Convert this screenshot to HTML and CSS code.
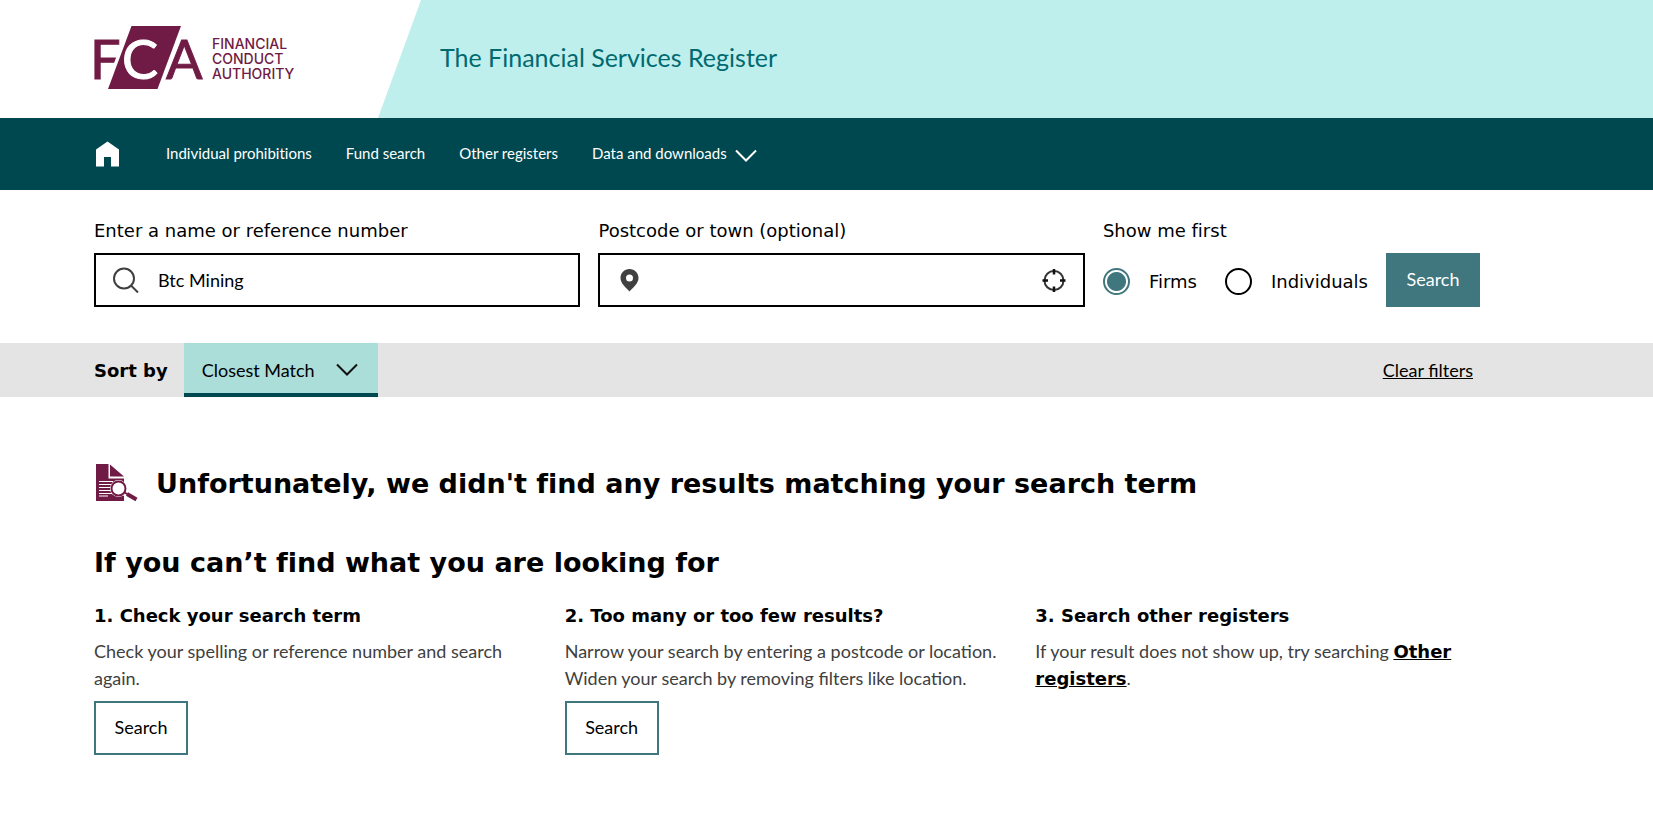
FILE: index.html
```html
<!DOCTYPE html>
<html lang="en">
<head>
<meta charset="utf-8">
<meta name="viewport" content="width=device-width, initial-scale=1">
<title>The Financial Services Register</title>
<link rel="stylesheet" href="styles.css">
</head>
<body>
<header class="masthead">
  <a class="logo" href="#" aria-label="Financial Conduct Authority">
    <svg width="202" height="64" viewBox="0 0 202 64" aria-hidden="true">
      <text class="logo-letter" x="-4" y="53">F</text>
      <path d="M34.500 -2.500L9.500 66H62L87 -2.500Z" fill="#fff"/>
      <path d="M37.500 0H87L63.500 63H14Z" fill="#701b45"/>
      <text class="logo-letter logo-letter-light" x="28" y="53">C</text>
      <text class="logo-letter" x="72" y="53">A</text>
      <text class="logo-name" x="118" y="23">FINANCIAL</text>
      <text class="logo-name" x="118" y="38">CONDUCT</text>
      <text class="logo-name" x="118" y="53">AUTHORITY</text>
    </svg>
  </a>
  <div class="masthead-band"><span class="masthead-title">The Financial Services Register</span></div>
</header>

<nav class="main-nav" aria-label="Main">
  <a class="home-link" href="#" aria-label="Home">
    <svg width="24" height="26" viewBox="0 0 24 26" aria-hidden="true"><path d="M11.500 0.500L23 8.500V25.500H15V16H8V25.500H0V8.500Z" fill="#fff"/></svg>
  </a>
  <a class="nav-link" href="#">Individual prohibitions</a>
  <a class="nav-link" href="#">Fund search</a>
  <a class="nav-link" href="#">Other registers</a>
  <button class="nav-link nav-menu" type="button">Data and downloads
    <svg width="22" height="14" viewBox="0 0 22 14" aria-hidden="true"><path d="M1 1.500L11 11.500L21 1.500" fill="none" stroke="#fff" stroke-width="2"/></svg>
  </button>
</nav>

<main>
  <form class="search-form">
    <div class="field">
      <label class="field-label" for="name">Enter a name or reference number</label>
      <div class="input-box">
        <svg class="input-icon" width="26" height="26" viewBox="0 0 26 26" aria-hidden="true"><g fill="none" stroke="#404040" stroke-width="2"><circle cx="11" cy="11.500" r="10"/><path d="M18 18.500L25 25.500"/></g></svg>
        <input class="text-input" id="name" type="text" value="Btc Mining">
      </div>
    </div>
    <div class="field">
      <label class="field-label" for="place">Postcode or town (optional)</label>
      <div class="input-box">
        <svg class="input-icon" width="26" height="26" viewBox="0 0 26 26" aria-hidden="true"><path fill="#404040" fill-rule="evenodd" d="M12.500 2C7.300 2 3.500 6 3.500 11C3.500 16.500 9 20.500 12.500 24.500C16 20.500 21.500 16.500 21.500 11C21.500 6 17.700 2 12.500 2ZM12.500 7.500A3.500 3.500 0 1 1 12.500 14.500A3.500 3.500 0 1 1 12.500 7.500Z"/></svg>
        <input class="text-input" id="place" type="text">
        <button class="locate" type="button" aria-label="Use my location">
          <svg width="24" height="24" viewBox="0 0 24 24" aria-hidden="true"><circle cx="12" cy="12.500" r="9.500" fill="none" stroke="#333" stroke-width="2"/><path d="M12 1V6.500M12 18.500V24M0.500 12.500H6M18 12.500H23.500" fill="none" stroke="#111" stroke-width="2.500"/></svg>
        </button>
      </div>
    </div>
    <fieldset class="choices">
      <legend class="field-label">Show me first</legend>
      <div class="choice-row">
        <label class="choice"><input class="radio" type="radio" name="first" checked>Firms</label>
        <label class="choice"><input class="radio" type="radio" name="first">Individuals</label>
      </div>
    </fieldset>
    <button class="button button-solid" type="submit">Search</button>
  </form>

  <div class="sort-bar">
    <div class="sort-inner">
      <label class="sort-label" for="sort">Sort by</label>
      <div class="sort-box">
        <select class="sort-select" id="sort"><option>Closest Match</option></select>
        <svg class="sort-chevron" width="22" height="14" viewBox="0 0 22 14" aria-hidden="true"><path d="M1 1.500L11 11.500L21 1.500" fill="none" stroke="#111" stroke-width="2"/></svg>
      </div>
      <a class="clear-link" href="#">Clear filters</a>
    </div>
  </div>

  <section class="results">
    <div class="notice">
      <svg class="notice-icon" width="42" height="38" viewBox="0 0 42 38" aria-hidden="true">
        <path d="M0 0H12.500V14.500H28V37H0Z" fill="#701b45"/>
        <path d="M14 0.500L28 12.500H14Z" fill="#701b45"/>
        <path d="M3 17.500H17M3 20.500H15M3 23.500H15M3 26.500H15M3 29.500H17M3 32H12" stroke="#fff" stroke-width="1"/>
        <circle cx="22.500" cy="24.500" r="8.500" fill="#fff"/>
        <path d="M28 28.500L41 36.500" stroke="#fff" stroke-width="6"/>
        <circle cx="22.500" cy="24.500" r="7" fill="#fff" stroke="#701b45" stroke-width="2"/>
        <path d="M28.500 28.500L32 30.500" stroke="#701b45" stroke-width="2"/>
        <path d="M31 30L40.500 35.500" stroke="#701b45" stroke-width="4"/>
      </svg>
      <h1 class="heading">Unfortunately, we didn't find any results matching your search term</h1>
    </div>
    <h2 class="heading">If you can’t find what you are looking for</h2>
    <div class="tips">
      <div class="tip">
        <h3 class="tip-title">1. Check your search term</h3>
        <p class="tip-text">Check your spelling or reference number and search again.</p>
        <button class="button button-outline" type="button">Search</button>
      </div>
      <div class="tip">
        <h3 class="tip-title">2. Too many or too few results?</h3>
        <p class="tip-text">Narrow your search by entering a postcode or location. Widen your search by removing filters like location.</p>
        <button class="button button-outline" type="button">Search</button>
      </div>
      <div class="tip">
        <h3 class="tip-title">3. Search other registers</h3>
        <p class="tip-text">If your result does not show up, try searching <a class="strong-link" href="#">Other registers</a>.</p>
      </div>
    </div>
  </section>
</main>
</body>
</html>
```
FILE: styles.css
```css
* {
  box-sizing: border-box;
}

:root {
  --gutter: 94px;
  --dark: #004850;
  --teal: #40767d;
  --plum: #701b45;
  --text: Lato, "Liberation Sans", sans-serif;
  --display: "DejaVu Sans", Verdana, sans-serif;
}

body {
  margin: 0;
  background: #fff;
  color: #000;
  font: 18px/27px var(--text);
}

button,
input,
select {
  margin: 0;
  font: inherit;
  color: inherit;
}

.masthead {
  display: flex;
  height: 118px;
  padding-left: var(--gutter);
}

.logo {
  width: 284px;
  padding-top: 26px;
}

.logo svg {
  display: block;
  overflow: visible;
}

.logo-letter {
  font: 54px var(--text);
  fill: var(--plum);
  stroke: var(--plum);
  stroke-width: 1px;
}

.logo-letter-light {
  fill: #fff;
  stroke: #fff;
}

.logo-name {
  font: 500 14px Inter, var(--text);
  fill: var(--plum);
}

.masthead-band {
  flex: 1;
  display: flex;
  align-items: center;
  padding: 0 0 4px 62px;
  background: #bfefec;
  clip-path: polygon(43px 0, 100% 0, 100% 100%, 0 100%);
}

.masthead-title {
  color: #006a70;
  font-size: 25px;
}

.main-nav {
  display: flex;
  align-items: center;
  gap: 34px;
  min-height: 72px;
  padding: 0 0 1px 96px;
  background: var(--dark);
  color: #fff;
  font-variant-ligatures: none;
}

.home-link {
  display: flex;
  margin-right: 12px;
}

.nav-link {
  color: #fff;
  font-size: 15px;
  text-decoration: none;
}

.nav-menu {
  display: flex;
  align-items: center;
  gap: 8px;
  padding: 0;
  border: 0;
  background: none;
}

.nav-menu svg {
  margin-top: 4px;
}

.search-form {
  display: flex;
  align-items: flex-end;
  gap: 18px;
  max-width: 1480px;
  padding: 27px 0 36px var(--gutter);
}

.field {
  flex: 1;
}

.field-label {
  display: block;
  margin-bottom: 9px;
  padding: 0;
  font-family: var(--display);
  font-variant-ligatures: none;
}

.input-box {
  display: flex;
  align-items: center;
  height: 54px;
  padding: 0 17px;
  border: 2px solid #000;
}

.text-input {
  flex: 1;
  min-width: 0;
  margin-left: 19px;
  padding: 0;
  border: 0;
  outline: 0;
  background: none;
}

.locate {
  display: flex;
  padding: 0;
  border: 0;
  background: none;
}

.choices {
  margin: 0;
  padding: 0;
  border: 0;
}

.choice-row {
  display: flex;
  align-items: center;
  gap: 28px;
  height: 54px;
  padding-top: 2px;
}

.choice {
  display: flex;
  align-items: center;
  gap: 19px;
  font-family: var(--display);
}

.radio {
  appearance: none;
  width: 27px;
  height: 27px;
  border: 2px solid #000;
  border-radius: 50%;
}

.radio:checked {
  border-color: var(--teal);
  background: radial-gradient(circle, var(--teal) 9px, #fff 10px);
}

.button {
  min-width: 94px;
  height: 54px;
  padding: 0 18px 2px;
  border: 2px solid var(--teal);
}

.button-solid {
  background: var(--teal);
  color: #fff;
}

.button-outline {
  background: #fff;
}

.sort-bar {
  background: #e4e4e4;
}

.sort-inner {
  display: flex;
  align-items: center;
  max-width: 1473px;
  height: 54px;
  padding-left: var(--gutter);
}

.sort-label {
  margin-right: 16px;
  font-family: var(--display);
  font-weight: bold;
}

.sort-box {
  display: grid;
  align-items: center;
  width: 194px;
  height: 54px;
}

.sort-select {
  grid-area: 1 / 1;
  appearance: none;
  width: 100%;
  height: 100%;
  padding: 4px 18px 0;
  border: 0;
  border-bottom: 4px solid var(--dark);
  border-radius: 0;
  background: #abddd9;
}

.sort-chevron {
  grid-area: 1 / 1;
  justify-self: end;
  margin-right: 20px;
  pointer-events: none;
}

.clear-link {
  margin-left: auto;
  color: #000;
}

.results {
  max-width: 1506px;
  padding: 66px 0 36px var(--gutter);
}

.notice {
  display: flex;
  align-items: center;
  gap: 18px;
  margin-bottom: 38px;
  padding-left: 2px;
}

.notice-icon {
  margin-bottom: 2px;
}

.heading {
  margin: 0;
  font: bold 27px/41px var(--display);
  font-variant-ligatures: none;
}

.tips {
  display: grid;
  grid-template-columns: repeat(3, 1fr);
  margin-top: 19px;
}

.tip {
  padding-right: 36px;
}

.tip-title {
  margin: 0 0 9px;
  font: bold 18px/27px var(--display);
}

.tip-text {
  margin: 0 0 9px;
  color: #404040;
}

.strong-link {
  color: #000;
  font-family: var(--display);
  font-weight: bold;
}
```
